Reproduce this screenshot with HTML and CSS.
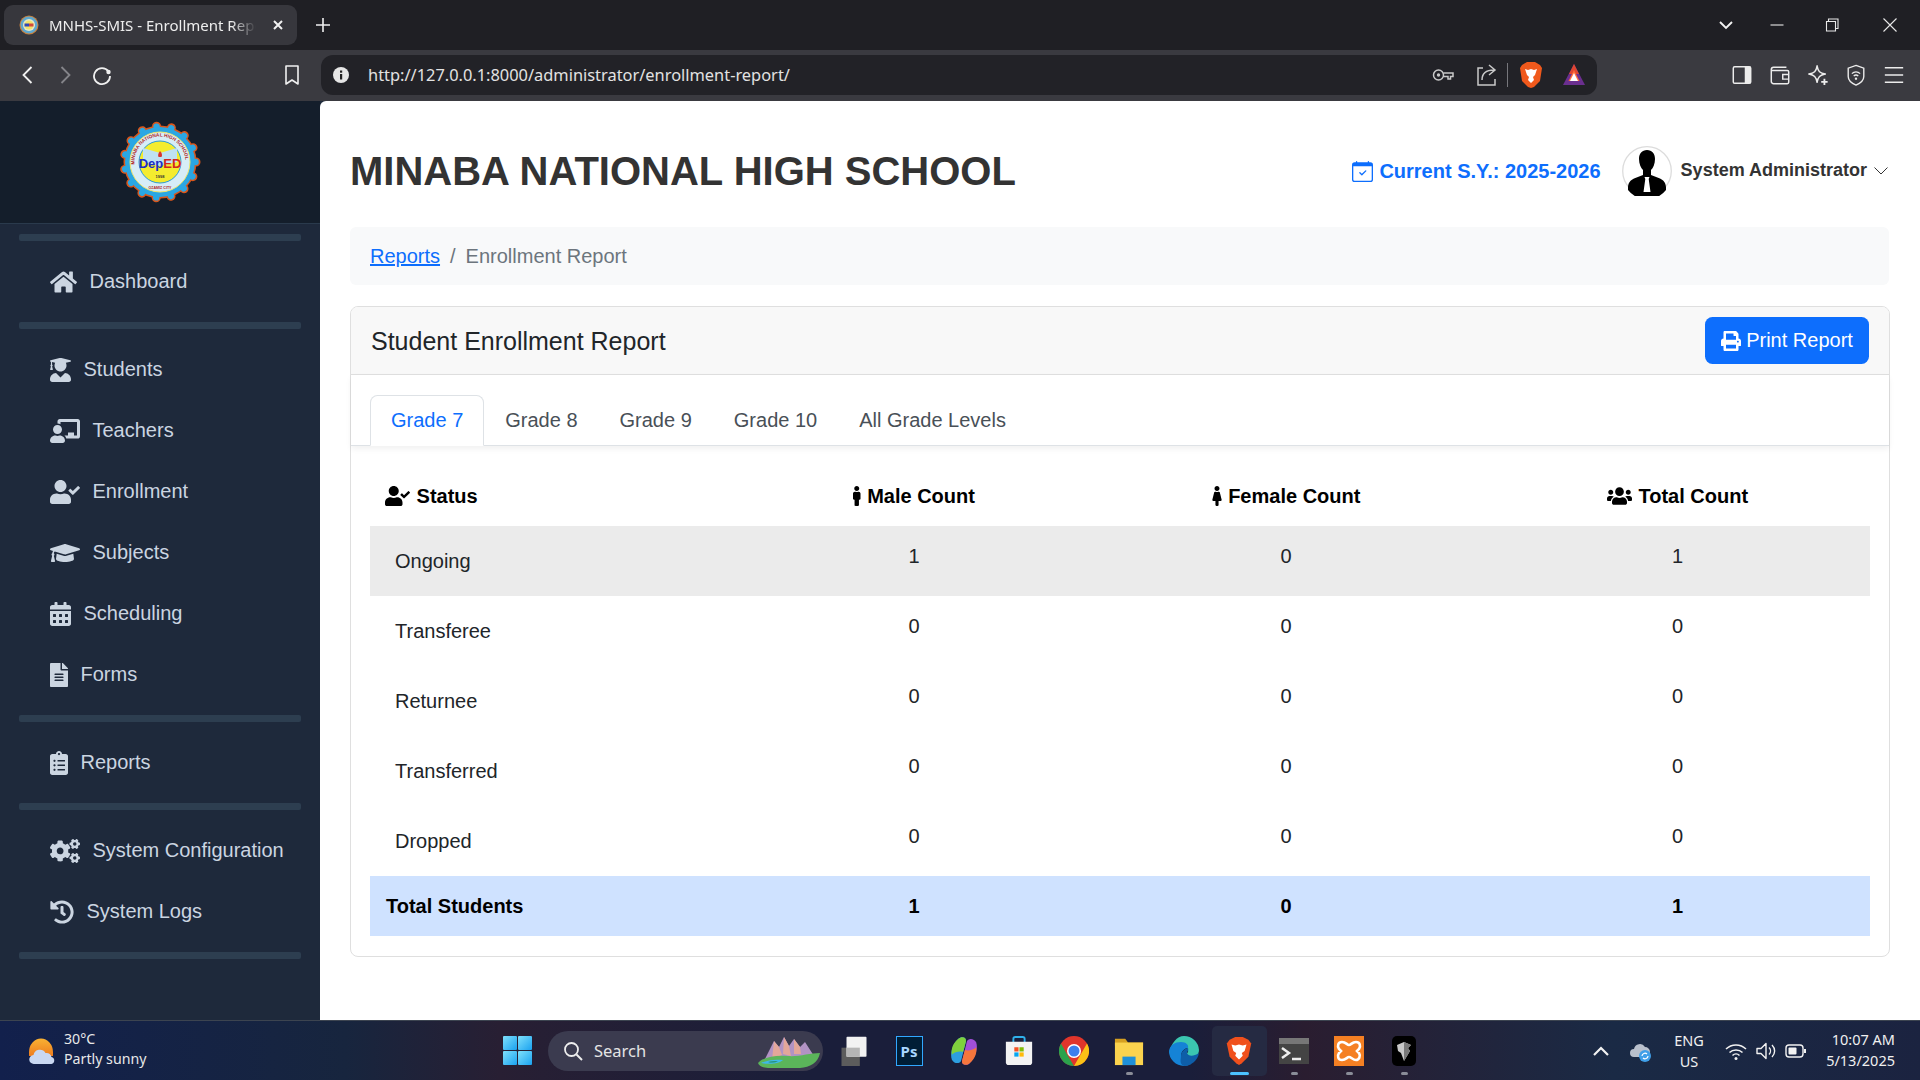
FILE: index.html
```html
<!DOCTYPE html>
<html lang="en">
<head>
<meta charset="utf-8">
<title>MNHS-SMIS - Enrollment Report</title>
<link rel="stylesheet" href="styles.css">
</head>
<body>
<div class="window">

  <div class="tabstrip">
    <div class="tab">
      <svg class="favicon" viewBox="0 0 40 40"><circle cx="20" cy="20" r="19" fill="#c9803c"/><circle cx="20" cy="20" r="17" fill="#5fa8cf"/><circle cx="20" cy="20" r="12" fill="#e9e9c8"/><circle cx="20" cy="20" r="9" fill="#f1e36a"/><rect x="11" y="17" width="9" height="6" fill="#3048b8"/><rect x="20" y="17" width="9" height="6" fill="#d24a3a"/></svg>
      <span class="tab-title">MNHS-SMIS - Enrollment Repo</span>
      <svg class="tab-close" viewBox="0 0 12 12"><path d="M2 2l8 8M10 2l-8 8" stroke="#f2f2f2" stroke-width="2" fill="none"/></svg>
    </div>
    <svg class="tab-new" viewBox="0 0 14 14"><path d="M7 0v14M0 7h14" stroke="#f0f0f0" stroke-width="1.6" fill="none"/></svg>
    <div class="winctl">
      <svg class="wc" viewBox="0 0 14 14"><path d="M1 4l6 6 6-6" stroke="#f2f2f2" stroke-width="1.9" fill="none"/></svg>
      <svg class="wc" viewBox="0 0 14 14"><path d="M0.5 7h13" stroke="#e8e8e8" stroke-width="1.1" fill="none"/></svg>
      <svg class="wc" viewBox="0 0 14 14"><path d="M1.5 3.5h9v9.500h-9zM3.500 3.500v-2.500h9.500v9.500h-2.500" stroke="#e8e8e8" stroke-width="1.1" fill="none"/></svg>
      <svg class="wc" viewBox="0 0 14 14"><path d="M0.500 0.500l13 13M13.500 0.500l-13 13" stroke="#e8e8e8" stroke-width="1.100" fill="none"/></svg>
    </div>
  </div>

  <div class="toolbar">
    <svg class="tb tb-first" viewBox="0 0 22 22"><path d="M14.500 3l-8 8 8 8" stroke="#f0f0f0" stroke-width="1.800" fill="none"/></svg>
    <svg class="tb" viewBox="0 0 22 22"><path d="M7.500 3l8 8-8 8" stroke="#85858a" stroke-width="1.800" fill="none"/></svg>
    <svg class="tb tb-reload" viewBox="0 0 22 22"><path d="M17.500 7.500A8 8 0 1 0 19 12" stroke="#f0f0f0" stroke-width="1.800" fill="none"/><circle cx="17.500" cy="8" r="2.200" fill="#f0f0f0"/></svg>
    <svg class="tb tb-book" viewBox="0 0 22 22"><path d="M5 2h12v18l-6-4-6 4z" stroke="#f0f0f0" stroke-width="1.600" fill="none" stroke-linejoin="round"/></svg>
    <div class="addr">
      <svg class="addr-info" viewBox="0 0 16 16"><circle cx="8" cy="8" r="8" fill="#e6e6e6"/><rect x="7" y="7" width="2.200" height="5.500" fill="#222"/><rect x="7" y="3.500" width="2.200" height="2.200" fill="#222"/></svg>
      <span class="url">http://127.0.0.1:8000/administrator/enrollment-report/</span>
      <svg class="ad ad-key" viewBox="0 0 24 24"><circle cx="7.500" cy="12" r="5" stroke="#c9c9c9" stroke-width="1.500" fill="none"/><circle cx="7.500" cy="12" r="1.700" fill="#c9c9c9"/><path d="M12.500 10h9.500v3.500h-2.500v2.500h-2.500v-2.500h-4.500" stroke="#c9c9c9" stroke-width="1.500" fill="none"/></svg>
      <svg class="ad ad-share" viewBox="0 0 24 24"><path d="M9 5H4v17h17v-6M8 17c0-6 4-10 12-10M15 2l6 5-6 5" stroke="#c9c9c9" stroke-width="1.500" fill="none"/></svg>
      <span class="ad-sep"></span>
      <svg class="ad ad-brave" viewBox="0 0 24 28"><path d="M3 4l5-3h8l5 3 2 3-2 13-6 6-3 1-3-1-6-6L1 7z" fill="#f0591c"/><path d="M6 8l3 1 3-1 3 1 3-1-2 6-2 2 1 3-3 3-3-3 1-3-2-2z" fill="#fff"/></svg>
      <svg class="ad" viewBox="0 0 24 24"><path d="M12 1l11 21H1z" fill="#6b2f8f"/><path d="M12 1L7 11 3 19z" fill="#e0452f"/><path d="M12 1l5 10h-10z" fill="#e0452f"/><path d="M12 7l5.500 11H6.500z" fill="#ff6d3d"/><path d="M12 10l4 8H8z" fill="#fff"/></svg>
    </div>
    <svg class="tb tb-side" viewBox="0 0 24 24"><rect x="2.500" y="3" width="19" height="18" rx="1.500" fill="none" stroke="#ececec" stroke-width="1.600"/><rect x="15" y="3" width="6.500" height="18" fill="#ececec"/></svg>
    <svg class="tb" viewBox="0 0 24 24"><path d="M19 3.500H5A2.500 2.500 0 0 0 2.500 6v13A2.500 2.500 0 0 0 5 21.500h15a1.500 1.500 0 0 0 1.500-1.500V8.500a1.500 1.500 0 0 0-1.500-1.500H3M15 11.500h6.500v5H15z" fill="none" stroke="#ececec" stroke-width="1.600"/></svg>
    <svg class="tb" viewBox="0 0 24 24"><path d="M11 2c1 6 3 8 9 9-6 1-8 3-9 9-1-6-3-8-9-9 6-1 8-3 9-9z" fill="none" stroke="#ececec" stroke-width="1.600" stroke-linejoin="round"/><path d="M19 16v7M15.500 19.500h7" stroke="#ececec" stroke-width="2"/></svg>
    <svg class="tb" viewBox="0 0 24 24"><path d="M12 1.500l8.500 3v9c0 4.500-4 7.500-8.500 9.500-4.500-2-8.500-5-8.500-9.500v-9z" fill="none" stroke="#ececec" stroke-width="1.500"/><path d="M7.500 10.500c2.500-2.500 6.500-2.500 9 0M9.500 13c1.500-1.200 3.500-1.200 5 0" fill="none" stroke="#ececec" stroke-width="1.400"/><circle cx="12" cy="16" r="1.300" fill="#ececec"/></svg>
    <svg class="tb" viewBox="0 0 24 24"><path d="M2 4h20M2 12h20M2 20h20" stroke="#ececec" stroke-width="1.700"/></svg>
  </div>

  <div class="app">
    <aside class="sidebar">
      <div class="brand">
        <svg class="logo" viewBox="0 0 82 82">
          <defs><path id="ring" d="M20.100 55.600A25.500 25.500 0 1 1 61.900 55.600"/></defs>
          <circle cx="41" cy="41" r="36" fill="none" stroke="#d9561b" stroke-width="9" stroke-linecap="round" stroke-dasharray="0.010 15.070"/>
          <circle cx="41" cy="41" r="36.500" fill="#d9561b"/>
          <circle cx="41" cy="41" r="35.500" fill="none" stroke="#2aa7e3" stroke-width="6.500" stroke-linecap="round" stroke-dasharray="0.010 14.860"/>
          <circle cx="41" cy="41" r="35" fill="#2aa7e3"/>
          <circle cx="41" cy="41" r="30" fill="#d7edf7" stroke="#f4e56a" stroke-width="1"/>
          <text class="logo-ring"><textPath href="#ring" startOffset="13">MINABA NATIONAL HIGH SCHOOL</textPath></text>
          <circle cx="41" cy="41" r="21" fill="#f4ec2f" stroke="#2a9bd6" stroke-width="1"/>
          <path d="M24 27l17 5 17-5v14l-17 4-17-4z" fill="#bfe1f3"/>
          <path d="M41 30c2 2 2.500 4 1.500 6h-3c-1-2 0-4 1.500-6z" fill="#d8342a"/>
          <text class="logo-dep" x="41" y="47"><tspan class="dep-b">Dep</tspan><tspan class="dep-r">ED</tspan></text>
          <text class="logo-yr" x="41" y="57">1998</text>
          <text class="logo-city" x="41" y="68">OZAMIZ CITY</text>
        </svg>
      </div>
      <div class="rule"></div>
      <a class="item"><svg class="nav-ic" viewBox="0 0 576 512"><path d="M280.37 148.26L96 300.11V464a16 16 0 0 0 16 16l112.06-.29a16 16 0 0 0 15.92-16V368a16 16 0 0 1 16-16h64a16 16 0 0 1 16 16v95.64a16 16 0 0 0 16 16.05L464 480a16 16 0 0 0 16-16V300L295.67 148.26a12.19 12.19 0 0 0-15.3 0zM571.6 251.47L488 182.56V44.05a12 12 0 0 0-12-12h-56a12 12 0 0 0-12 12v72.61L318.47 43a48 48 0 0 0-61 0L4.34 251.47a12 12 0 0 0-1.6 16.9l25.5 31A12 12 0 0 0 45.15 301l235.22-193.74a12.19 12.19 0 0 1 15.3 0L530.9 301a12 12 0 0 0 16.9-1.6l25.5-31a12 12 0 0 0-1.7-16.93z"/></svg>Dashboard</a>
      <div class="rule"></div>
      <a class="item"><svg class="nav-ic" viewBox="0 0 448 512"><path d="M319.4 320.6L224 416l-95.4-95.4C57.1 323.7 0 382.2 0 454.4v9.6c0 26.5 21.5 48 48 48h352c26.5 0 48-21.5 48-48v-9.6c0-72.2-57.1-130.7-128.6-133.8zM13.6 79.8l6.4 1.5v58.4c-7 4.2-12 11.5-12 20.3 0 8.4 4.6 15.4 11.1 19.7L3.5 242c-1.7 6.9 2.1 14 7.6 14h41.8c5.5 0 9.3-7.1 7.6-14l-15.6-62.3C51.4 175.4 56 168.4 56 160c0-8.8-5-16.1-12-20.3V87.1l66 15.9c-8.6 17.2-14 36.4-14 57 0 70.7 57.3 128 128 128s128-57.3 128-128c0-20.6-5.3-39.8-14-57l96.3-23.2c18.2-4.4 18.2-27.1 0-31.5l-190.4-46c-13-3.1-26.7-3.1-39.7 0L13.6 48.2c-18.1 4.4-18.1 27.2 0 31.6z"/></svg>Students</a>
      <a class="item"><svg class="nav-ic" viewBox="0 0 640 512"><path d="M208 352c-2.39 0-4.78.35-7.06 1.09C187.98 357.3 174.35 360 160 360c-14.35 0-27.98-2.7-40.95-6.91-2.28-.74-4.66-1.09-7.05-1.09C49.94 352-.33 402.48 0 464.62.14 490.88 21.73 512 48 512h224c26.27 0 47.86-21.12 48-47.38.33-62.14-49.94-112.62-112-112.62zm-48-32c53.02 0 96-42.98 96-96s-42.98-96-96-96-96 42.98-96 96 42.98 96 96 96zM592 0H208c-26.47 0-48 22.25-48 49.59V96c23.42 0 45.1 6.78 64 17.8V64h352v288h-64v-64H384v64h-76.24c19.1 16.69 33.12 38.73 39.69 64H592c26.47 0 48-22.25 48-49.59V49.59C640 22.25 618.47 0 592 0z"/></svg>Teachers</a>
      <a class="item"><svg class="nav-ic" viewBox="0 0 640 512"><path d="M224 256c70.7 0 128-57.3 128-128S294.7 0 224 0 96 57.3 96 128s57.3 128 128 128zm89.6 32h-16.7c-22.2 10.2-46.9 16-72.9 16s-50.6-5.8-72.9-16h-16.7C60.2 288 0 348.2 0 422.4V464c0 26.5 21.5 48 48 48h352c26.5 0 48-21.5 48-48v-41.6c0-74.2-60.2-134.4-134.4-134.4zm323-128.4l-27.8-28.1c-4.6-4.7-12.1-4.7-16.8-.1l-104.8 104-45.5-45.8c-4.6-4.7-12.1-4.7-16.8-.1l-28.1 27.9c-4.7 4.6-4.7 12.1-.1 16.8l81.7 82.3c4.6 4.7 12.1 4.7 16.8.1l141.3-140.2c4.6-4.7 4.7-12.2.1-16.8z"/></svg>Enrollment</a>
      <a class="item"><svg class="nav-ic" viewBox="0 0 640 512"><path d="M622.34 153.2L343.4 67.5c-15.2-4.67-31.6-4.67-46.79 0L17.66 153.2c-23.54 7.23-23.54 38.36 0 45.59l48.63 14.94c-10.67 13.19-17.23 29.28-17.88 46.9C38.78 266.15 32 276.11 32 288c0 10.78 5.68 19.85 13.86 25.65L20.33 428.53C18.11 438.52 25.71 448 35.94 448h56.11c10.24 0 17.84-9.48 15.62-19.47L82.14 313.65C90.32 307.85 96 298.78 96 288c0-11.57-6.47-21.25-15.66-26.87.76-15.02 8.44-28.3 20.69-36.72L296.6 284.5c9.06 2.78 26.44 6.25 46.79 0l278.95-85.7c23.55-7.24 23.55-38.36 0-45.6zM352.79 315.09c-28.53 8.76-52.84 3.92-65.59 0l-145.02-44.55L128 384c0 35.35 85.96 64 192 64s192-28.65 192-64l-14.18-113.47-145.03 44.56z"/></svg>Subjects</a>
      <a class="item"><svg class="nav-ic" viewBox="0 0 448 512"><path d="M0 464c0 26.5 21.5 48 48 48h352c26.5 0 48-21.5 48-48V192H0v272zm320-196c0-6.6 5.4-12 12-12h40c6.6 0 12 5.4 12 12v40c0 6.6-5.4 12-12 12h-40c-6.6 0-12-5.4-12-12v-40zm0 128c0-6.6 5.4-12 12-12h40c6.6 0 12 5.4 12 12v40c0 6.6-5.4 12-12 12h-40c-6.6 0-12-5.4-12-12v-40zM192 268c0-6.6 5.4-12 12-12h40c6.6 0 12 5.4 12 12v40c0 6.6-5.4 12-12 12h-40c-6.6 0-12-5.4-12-12v-40zm0 128c0-6.6 5.4-12 12-12h40c6.6 0 12 5.4 12 12v40c0 6.6-5.4 12-12 12h-40c-6.6 0-12-5.4-12-12v-40zM64 268c0-6.6 5.4-12 12-12h40c6.6 0 12 5.4 12 12v40c0 6.6-5.4 12-12 12H76c-6.6 0-12-5.4-12-12v-40zm0 128c0-6.6 5.4-12 12-12h40c6.6 0 12 5.4 12 12v40c0 6.6-5.4 12-12 12H76c-6.6 0-12-5.4-12-12v-40zM400 64h-48V16c0-8.8-7.2-16-16-16h-32c-8.8 0-16 7.2-16 16v48H160V16c0-8.8-7.2-16-16-16h-32c-8.8 0-16 7.2-16 16v48H48C21.500 64 0 85.500 0 112v48h448v-48c0-26.500-21.500-48-48-48z"/></svg>Scheduling</a>
      <a class="item"><svg class="nav-ic" viewBox="0 0 384 512"><path d="M224 136V0H24C10.700 0 0 10.700 0 24v464c0 13.300 10.700 24 24 24h336c13.300 0 24-10.700 24-24V160H248c-13.200 0-24-10.800-24-24zm64 236c0 6.600-5.400 12-12 12H108c-6.600 0-12-5.400-12-12v-8c0-6.600 5.400-12 12-12h168c6.600 0 12 5.400 12 12v8zm0-64c0 6.600-5.400 12-12 12H108c-6.600 0-12-5.400-12-12v-8c0-6.600 5.400-12 12-12h168c6.600 0 12 5.400 12 12v8zm0-72v8c0 6.600-5.400 12-12 12H108c-6.600 0-12-5.400-12-12v-8c0-6.600 5.400-12 12-12h168c6.600 0 12 5.400 12 12zm96-114.100v6.100H256V0h6.100c6.400 0 12.500 2.500 17 7l97.900 98c4.500 4.500 7 10.600 7 16.900z"/></svg>Forms</a>
      <div class="rule"></div>
      <a class="item"><svg class="nav-ic" viewBox="0 0 384 512"><path d="M336 64h-80c0-35.300-28.700-64-64-64s-64 28.700-64 64H48C21.500 64 0 85.500 0 112v352c0 26.500 21.500 48 48 48h288c26.500 0 48-21.500 48-48V112c0-26.500-21.500-48-48-48zM96 424c-13.300 0-24-10.700-24-24s10.700-24 24-24 24 10.700 24 24-10.700 24-24 24zm0-96c-13.300 0-24-10.700-24-24s10.700-24 24-24 24 10.700 24 24-10.700 24-24 24zm0-96c-13.300 0-24-10.700-24-24s10.700-24 24-24 24 10.700 24 24-10.700 24-24 24zm96-192c13.300 0 24 10.700 24 24s-10.700 24-24 24-24-10.700-24-24 10.700-24 24-24zm128 368c0 4.400-3.600 8-8 8H168c-4.400 0-8-3.600-8-8v-16c0-4.400 3.600-8 8-8h144c4.400 0 8 3.600 8 8v16zm0-96c0 4.400-3.600 8-8 8H168c-4.400 0-8-3.600-8-8v-16c0-4.400 3.600-8 8-8h144c4.400 0 8 3.600 8 8v16zm0-96c0 4.400-3.600 8-8 8H168c-4.400 0-8-3.600-8-8v-16c0-4.400 3.600-8 8-8h144c4.400 0 8 3.600 8 8v16z"/></svg>Reports</a>
      <div class="rule"></div>
      <a class="item"><svg class="nav-ic" viewBox="0 0 640 512"><path d="M512.100 191l-8.200 14.300c-3 5.300-9.400 7.500-15.100 5.400-11.800-4.400-22.600-10.700-32.100-18.600-4.600-3.800-5.800-10.500-2.800-15.700l8.200-14.300c-6.900-8-12.300-17.300-15.900-27.400h-16.500c-6 0-11.200-4.300-12.200-10.300-2-12-2.100-24.600 0-37.100 1-6 6.200-10.400 12.200-10.400h16.500c3.600-10.100 9-19.400 15.900-27.400l-8.200-14.300c-3-5.200-1.900-11.900 2.800-15.700 9.500-7.900 20.400-14.200 32.100-18.600 5.700-2.100 12.100.1 15.100 5.400l8.200 14.300c10.500-1.900 21.200-1.900 31.700 0L552 6.300c3-5.300 9.400-7.500 15.100-5.400 11.800 4.400 22.600 10.700 32.100 18.600 4.600 3.800 5.800 10.500 2.800 15.700l-8.200 14.300c6.900 8 12.300 17.300 15.900 27.400h16.500c6 0 11.200 4.300 12.200 10.300 2 12 2.100 24.600 0 37.100-1 6-6.200 10.400-12.200 10.400h-16.500c-3.600 10.100-9 19.400-15.900 27.400l8.200 14.300c3 5.200 1.900 11.900-2.800 15.700-9.500 7.900-20.400 14.200-32.100 18.600-5.700 2.100-12.100-.1-15.100-5.400l-8.200-14.300c-10.400 1.900-21.200 1.900-31.700 0zm-10.500-58.800c38.500 29.600 82.400-14.300 52.800-52.800-38.500-29.700-82.400 14.300-52.800 52.800zM386.300 286.100l33.700 16.800c10.100 5.800 14.500 18.100 10.500 29.100-8.900 24.200-26.400 46.400-42.600 65.800-7.400 8.900-20.200 11.100-30.300 5.300l-29.100-16.800c-16 13.700-34.600 24.600-54.900 31.700v33.600c0 11.600-8.300 21.600-19.700 23.600-24.600 4.200-50.400 4.400-75.900 0-11.500-2-20-11.900-20-23.600V418c-20.300-7.200-38.900-18-54.900-31.700L74 403c-10 5.800-22.900 3.600-30.300-5.300-16.200-19.400-33.300-41.600-42.200-65.700-4-10.900.4-23.200 10.500-29.100l33.300-16.800c-3.900-20.900-3.900-42.400 0-63.400L12 205.800c-10.100-5.800-14.600-18.100-10.500-29 8.900-24.200 26-46.400 42.200-65.800 7.400-8.900 20.200-11.100 30.300-5.300l29.100 16.800c16-13.700 34.600-24.600 54.900-31.700V57.100c0-11.500 8.200-21.500 19.600-23.500 24.600-4.200 50.500-4.400 76-.1 11.500 2 20 11.900 20 23.600v33.600c20.300 7.200 38.900 18 54.900 31.700l29.100-16.800c10-5.800 22.900-3.600 30.300 5.300 16.200 19.400 33.200 41.600 42.100 65.800 4 10.900.1 23.200-10 29.100l-33.700 16.800c3.900 21 3.900 42.500 0 63.500zm-117.600 21.100c59.200-77-28.700-164.900-105.700-105.700-59.200 77 28.700 164.900 105.700 105.700zm243.400 182.700l-8.200 14.300c-3 5.300-9.400 7.500-15.100 5.400-11.800-4.400-22.600-10.700-32.100-18.600-4.600-3.800-5.800-10.500-2.800-15.700l8.200-14.300c-6.900-8-12.300-17.300-15.900-27.400h-16.500c-6 0-11.200-4.300-12.200-10.300-2-12-2.100-24.600 0-37.100 1-6 6.200-10.400 12.200-10.400h16.500c3.600-10.100 9-19.400 15.900-27.400l-8.200-14.300c-3-5.200-1.900-11.900 2.800-15.700 9.500-7.900 20.400-14.200 32.100-18.600 5.700-2.100 12.100.1 15.100 5.400l8.200 14.300c10.500-1.900 21.200-1.900 31.700 0l8.200-14.300c3-5.300 9.400-7.500 15.100-5.400 11.800 4.400 22.600 10.700 32.100 18.600 4.600 3.800 5.800 10.500 2.800 15.700l-8.200 14.300c6.900 8 12.300 17.300 15.900 27.400h16.500c6 0 11.200 4.300 12.200 10.300 2 12 2.100 24.600 0 37.100-1 6-6.200 10.400-12.200 10.400h-16.500c-3.600 10.100-9 19.400-15.900 27.400l8.200 14.300c3 5.200 1.900 11.900-2.800 15.700-9.500 7.900-20.400 14.200-32.100 18.600-5.700 2.100-12.100-.1-15.100-5.400l-8.200-14.300c-10.400 1.900-21.200 1.900-31.700 0zM501.600 431c38.500 29.600 82.400-14.300 52.800-52.800-38.500-29.600-82.400 14.300-52.800 52.800z"/></svg>System Configuration</a>
      <a class="item"><svg class="nav-ic" viewBox="0 0 512 512"><path d="M504 255.531c.253 136.640-111.180 248.372-247.820 248.468-59.015.042-113.223-20.530-155.822-54.911-11.077-8.940-11.905-25.541-1.839-35.607l11.267-11.267c8.609-8.609 22.353-9.551 31.891-1.984C173.062 425.135 212.781 440 256 440c101.705 0 184-82.311 184-184 0-101.705-82.311-184-184-184-48.814 0-93.149 18.969-126.068 49.932l50.754 50.754c10.080 10.080 2.941 27.314-11.313 27.314H24c-8.837 0-16-7.163-16-16V38.627c0-14.254 17.234-21.393 27.314-11.314l49.372 49.372C129.209 34.136 189.552 8 256 8c136.810 0 247.747 110.780 248 247.531zm-180.912 78.784l9.823-12.630c8.138-10.463 6.253-25.542-4.210-33.679L288 256.349V152c0-13.255-10.745-24-24-24h-16c-13.255 0-24 10.745-24 24v135.651l65.409 50.874c10.463 8.137 25.541 6.253 33.679-4.210z"/></svg>System Logs</a>
      <div class="rule"></div>
    </aside>

    <main class="main">
      <header class="top">
        <h1 class="school">MINABA NATIONAL HIGH SCHOOL</h1>
        <div class="top-right">
          <div class="sy">
            <svg class="sy-ic" viewBox="0 0 16 16"><path d="M10.854 7.146a.5.5 0 0 1 0 .708l-3 3a.5.5 0 0 1-.708 0l-1.500-1.500a.5.5 0 1 1 .708-.708L7.500 9.793l2.646-2.647a.5.5 0 0 1 .708 0z"/><path d="M3.500 0a.5.5 0 0 1 .5.5V1h8V.5a.5.5 0 0 1 1 0V1h1a2 2 0 0 1 2 2v11a2 2 0 0 1-2 2H2a2 2 0 0 1-2-2V3a2 2 0 0 1 2-2h1V.5a.5.5 0 0 1 .5-.5zM1 4v10a1 1 0 0 0 1 1h12a1 1 0 0 0 1-1V4H1z"/></svg>
            <span>Current S.Y.: 2025-2026</span>
          </div>
          <svg class="avatar" viewBox="0 0 50 50"><circle cx="25" cy="25" r="24.300" fill="#fff" stroke="#dcdcdc" stroke-width="1.300"/><path d="M25 4c-5 0-8 3.500-8 9 0 5 2 9 4 11v5l-9 3.500c-3.500 1.500-6 4.500-6 9v2.500a24 24 0 0 0 38 0V41.500c0-4.500-2.500-7.500-6-9L29 29v-5c2-2 4-6 4-11 0-5.500-3-9-8-9z" fill="#000"/><path d="M22.500 31h5l-.800 2 1.800 13h-7l1.800-13z" fill="#fff"/></svg>
          <span class="who">System Administrator</span>
          <svg class="who-caret" viewBox="0 0 16 16"><path d="M1.500 4.500L8 11l6.500-6.500" fill="none" stroke="#333" stroke-width="1"/></svg>
        </div>
      </header>

      <nav class="crumbs"><a class="crumb-link">Reports</a><span class="crumb-sep">/</span><span class="crumb-cur">Enrollment Report</span></nav>

      <section class="card">
        <div class="card-head">
          <h5 class="card-title">Student Enrollment Report</h5>
          <button class="print"><svg class="print-ic" viewBox="0 0 512 512"><path d="M448 192V77.250c0-8.490-3.370-16.620-9.370-22.630L393.370 9.370c-6-6-14.140-9.370-22.630-9.370H96C78.330 0 64 14.330 64 32v160c-35.350 0-64 28.650-64 64v112c0 8.840 7.160 16 16 16h48v96c0 17.670 14.330 32 32 32h320c17.670 0 32-14.330 32-32v-96h48c8.840 0 16-7.160 16-16V256c0-35.350-28.650-64-64-64zm-64 256H128v-96h256v96zm0-224H128V64h192v48c0 8.840 7.160 16 16 16h48v96zm48 72c-13.250 0-24-10.750-24-24 0-13.260 10.750-24 24-24s24 10.740 24 24c0 13.250-10.750 24-24 24z"/></svg>Print Report</button>
        </div>
        <ul class="tabs">
          <li class="tab-link active">Grade 7</li>
          <li class="tab-link">Grade 8</li>
          <li class="tab-link">Grade 9</li>
          <li class="tab-link">Grade 10</li>
          <li class="tab-link">All Grade Levels</li>
        </ul>
        <div class="card-body">
          <table class="report">
            <colgroup><col class="c1"><col class="c2"><col class="c3"><col class="c4"></colgroup>
            <thead>
              <tr>
                <th class="th-status"><svg class="th-ic" viewBox="0 0 640 512"><path d="M224 256c70.700 0 128-57.300 128-128S294.700 0 224 0 96 57.300 96 128s57.300 128 128 128zm89.600 32h-16.700c-22.200 10.200-46.900 16-72.900 16s-50.600-5.800-72.900-16h-16.700C60.200 288 0 348.200 0 422.400V464c0 26.500 21.500 48 48 48h352c26.500 0 48-21.500 48-48v-41.600c0-74.200-60.200-134.400-134.400-134.400zm323-128.400l-27.800-28.100c-4.600-4.700-12.100-4.700-16.800-.1l-104.800 104-45.500-45.800c-4.600-4.700-12.100-4.700-16.800-.1l-28.100 27.900c-4.700 4.600-4.700 12.100-.1 16.800l81.700 82.300c4.600 4.700 12.100 4.700 16.800.1l141.300-140.200c4.600-4.700 4.700-12.200.1-16.800z"/></svg> Status</th>
                <th><svg class="th-ic" viewBox="0 0 192 512"><path d="M96 0c35.346 0 64 28.654 64 64s-28.654 64-64 64-64-28.654-64-64S60.654 0 96 0m48 144h-11.360c-22.711 10.443-49.590 10.894-73.280 0H48c-26.510 0-48 21.490-48 48v136c0 13.255 10.745 24 24 24h16v136c0 13.255 10.745 24 24 24h64c13.255 0 24-10.745 24-24V352h16c13.255 0 24-10.745 24-24V192c0-26.510-21.490-48-48-48z"/></svg> Male Count</th>
                <th><svg class="th-ic" viewBox="0 0 256 512"><path d="M128 0c35.346 0 64 28.654 64 64s-28.654 64-64 64c-35.346 0-64-28.654-64-64S92.654 0 128 0m119.283 354.179l-48-192A24 24 0 0 0 176 144h-11.360c-22.711 10.443-49.590 10.894-73.280 0H80a24 24 0 0 0-23.283 18.179l-48 192C4.935 369.305 16.383 384 32 384h56v104c0 13.255 10.745 24 24 24h32c13.255 0 24-10.745 24-24V384h56c15.591 0 27.071-14.671 23.283-29.821z"/></svg> Female Count</th>
                <th><svg class="th-ic" viewBox="0 0 640 512"><path d="M96 224c35.300 0 64-28.700 64-64s-28.700-64-64-64-64 28.700-64 64 28.700 64 64 64zm448 0c35.300 0 64-28.700 64-64s-28.700-64-64-64-64 28.700-64 64 28.700 64 64 64zm32 32h-64c-17.600 0-33.500 7.100-45.100 18.600 40.300 22.100 68.900 62 75.100 109.400h66c17.700 0 32-14.300 32-32v-32c0-35.300-28.700-64-64-64zm-256 0c61.900 0 112-50.100 112-112S381.900 32 320 32 208 82.100 208 144s50.100 112 112 112zm76.800 32h-8.300c-20.800 10-43.900 16-68.500 16s-47.600-6-68.500-16h-8.300C179.600 288 128 339.600 128 403.200V432c0 26.500 21.500 48 48 48h288c26.500 0 48-21.500 48-48v-28.800c0-63.600-51.600-115.200-115.200-115.200zm-223.700-13.400C161.500 263.100 145.600 256 128 256H64c-35.300 0-64 28.700-64 64v32c0 17.700 14.300 32 32 32h65.900c6.300-47.400 34.900-87.300 75.200-109.400z"/></svg> Total Count</th>
              </tr>
            </thead>
            <tbody>
              <tr class="striped"><td class="label">Ongoing</td><td>1</td><td>0</td><td>1</td></tr>
              <tr><td class="label">Transferee</td><td>0</td><td>0</td><td>0</td></tr>
              <tr><td class="label">Returnee</td><td>0</td><td>0</td><td>0</td></tr>
              <tr><td class="label">Transferred</td><td>0</td><td>0</td><td>0</td></tr>
              <tr><td class="label">Dropped</td><td>0</td><td>0</td><td>0</td></tr>
            </tbody>
            <tfoot>
              <tr><td class="foot-label">Total Students</td><td>1</td><td>0</td><td>1</td></tr>
            </tfoot>
          </table>
        </div>
      </section>
    </main>
  </div>

  <footer class="taskbar">
    <div class="weather">
      <svg class="weather-ic" viewBox="0 0 28 28"><defs><linearGradient id="sun" x1="0" y1="0" x2="0" y2="1"><stop offset="0" stop-color="#f9b233"/><stop offset="1" stop-color="#ee7d1f"/></linearGradient></defs><path d="M1 15a11.500 13 0 0 1 24 0v4H1z" fill="url(#sun)"/><path d="M6 27a4.500 4.500 0 0 1-.5-9 6.500 6.500 0 0 1 12-2 5.500 5.500 0 0 1 6 4 3.600 3.600 0 0 1 0 7z" fill="#c9d8f2"/></svg>
      <div class="weather-text"><span class="w-temp">30°C</span><span class="w-desc">Partly sunny</span></div>
    </div>
    <svg class="win" viewBox="0 0 29 29"><defs><linearGradient id="w" x1="0" y1="0" x2="1" y2="1"><stop offset="0" stop-color="#7fe0fb"/><stop offset="1" stop-color="#1aa2f0"/></linearGradient></defs><rect width="14" height="14" rx="1" fill="url(#w)"/><rect x="15" width="14" height="14" rx="1" fill="url(#w)"/><rect y="15" width="14" height="14" rx="1" fill="url(#w)"/><rect x="15" y="15" width="14" height="14" rx="1" fill="url(#w)"/></svg>
    <div class="search">
      <svg class="search-ic" viewBox="0 0 20 20"><circle cx="8.500" cy="8.500" r="6.500" fill="none" stroke="#eee" stroke-width="1.800"/><path d="M13.500 13.500l5.500 5.500" stroke="#eee" stroke-width="2"/></svg>
      <span class="search-text">Search</span>
      <svg class="search-art" viewBox="0 0 62 36"><path d="M6 28L16 8l5 6 5-10 5 9 5-7 6 8 5-5 9 14z" fill="#b293c4"/><path d="M16 8l5 6 3 8-10 5zM26 4l5 9 2 10-8-2zM36 6l6 8 1 7-7 0z" fill="#e3a79a"/><path d="M0 30c6-7 20-8 30-7s22-3 32-3c-2 10-10 14-20 15H10C5 35 1 33 0 30z" fill="#5bb55a"/><path d="M3 30c6-3 14-4 22-3-3 3-12 5-22 3z" fill="#3fb8e8"/><path d="M10 29c3-1 7-1 10-.5-3 1.200-7 1.500-10 .5z" fill="#1f8a5d"/></svg>
    </div>
    <div class="apps">
      <div class="app-cell"><svg class="app-ic" viewBox="0 0 32 36"><rect x="1" y="14" width="22" height="22" fill="#5c5c5c"/><rect x="7" y="1" width="24" height="24" rx="1" fill="#f2f2f2"/><rect x="7" y="14" width="16" height="11" fill="#b5b5b5"/></svg></div>
      <div class="app-cell"><div class="ps">Ps</div></div>
      <div class="app-cell"><svg class="app-ic" viewBox="0 0 30 32"><path d="M9 3c3-3 9-2 8 3L12 26c-1 4-8 4-10-1S2 10 9 3z" fill="#2d9fe0"/><path d="M9 3c3-3 9-2 8 3l-3 11c-4-1-9 0-12 3C1 14 3 8 9 3z" fill="#7fd03d"/><path d="M21 29c-3 3-9 2-8-3l5-20c1-4 8-4 10 1s0 15-7 22z" fill="#a24fd8"/><path d="M21 29c-3 3-9 2-8-3l3-11c4 1 9 0 12-3 1 6-1 12-7 17z" fill="#f5763c"/></svg></div>
      <div class="app-cell"><svg class="app-ic" viewBox="0 0 30 32"><path d="M9 7V3a2 2 0 0 1 2-2h8a2 2 0 0 1 2 2v4" fill="none" stroke="#2fb0ea" stroke-width="2"/><path d="M1 6h28v22a3 3 0 0 1-3 3H4a3 3 0 0 1-3-3z" fill="#f3f3f3"/><rect x="10" y="12" width="4.500" height="4.500" fill="#f35325"/><rect x="15.500" y="12" width="4.500" height="4.500" fill="#81bc06"/><rect x="10" y="17.500" width="4.500" height="4.500" fill="#05a6f0"/><rect x="15.500" y="17.500" width="4.500" height="4.500" fill="#ffba08"/></svg></div>
      <div class="app-cell"><svg class="app-ic" viewBox="0 0 30 30"><circle cx="15" cy="15" r="15" fill="#e0352b"/><path d="M15 30A15 15 0 0 1 2 7.500L9 20z" fill="#2ba24c"/><path d="M15 30l6.500-11.200L28 7.500A15 15 0 0 1 15 30z" fill="#fbc116"/><circle cx="15" cy="15" r="7" fill="#fff"/><circle cx="15" cy="15" r="5.500" fill="#3c7fec"/></svg></div>
      <div class="app-cell"><svg class="app-ic" viewBox="0 0 32 32"><path d="M1 3h11l3 4h16v3H1z" fill="#d6a021"/><rect x="1" y="7" width="30" height="24" fill="#fbd34e"/><rect x="9" y="22" width="14" height="9" fill="#1f90d8"/></svg><span class="dot"></span></div>
      <div class="app-cell"><svg class="app-ic" viewBox="0 0 30 30"><path d="M15 0a15 15 0 0 1 15 14c0 6-6 8-10 7-3-1-3-3-1-5 1-4-3-6-7-6-6 0-10 4-12 8C2 7 8 0 15 0z" fill="#3bc6b0"/><path d="M0 15C1 9 6 6 12 6c5 0 8 3 7 6-3 0-7 3-7 8 0 5 5 9 10 8-2 1-5 2-7 2A15 15 0 0 1 0 15z" fill="#1583d6"/><path d="M12 20c0-4 3-7 7-8 1 2-1 4-1 5 1 3 6 4 12 0-1 7-8 13-15 13-5-2-3-7-3-10z" fill="#0e5ea8"/></svg></div>
      <div class="app-cell app-on"><svg class="app-ic" viewBox="0 0 28 32"><path d="M4 4l6-3h8l6 3 3 4-3 14-7 7-3 2-3-2-7-7L1 8z" fill="#f0501c"/><path d="M6 9l4 1 4-1 4 1 4-1-2 7-3 2 1 3-4 4-4-4 1-3-3-2z" fill="#fff"/></svg><span class="bar"></span></div>
      <div class="app-cell"><svg class="app-ic" viewBox="0 0 30 30"><rect y="2" width="30" height="26" fill="#444"/><rect y="2" width="30" height="6" fill="#777"/><path d="M3 12l7 5-7 5" fill="none" stroke="#eee" stroke-width="2.500"/><path d="M13 23h9" stroke="#eee" stroke-width="2.500"/></svg><span class="dot"></span></div>
      <div class="app-cell"><svg class="app-ic" viewBox="0 0 30 30"><rect width="30" height="30" fill="#f58023"/><path d="M8 6c4 0 5 3 7 3s3-3 7-3 5 4 3 7l-2 2 2 2c2 3 0 7-3 7s-5-3-7-3-3 3-7 3-5-4-3-7l2-2-2-2C3 10 4 6 8 6z" fill="none" stroke="#fff" stroke-width="2.600"/></svg><span class="dot"></span></div>
      <div class="app-cell"><svg class="app-ic" viewBox="0 0 24 30"><rect width="24" height="30" rx="5" fill="#000"/><path d="M5 9l7-3 7 3-3 3 2 3-6 10-3-8-3-2z" fill="#c9c9c9"/><path d="M12 6l7 3-3 3 2 3-6 10z" fill="#7a7a7a"/></svg><span class="dot"></span></div>
    </div>
    <div class="tray">
      <svg class="tray-caret" viewBox="0 0 24 24"><path d="M5 16l7-7 7 7" fill="none" stroke="#f2f2f2" stroke-width="2.200"/></svg>
      <div class="tray-cloud"><svg class="t-ic" viewBox="0 0 24 24"><path d="M5 18a4 4 0 0 1 0-8 6 6 0 0 1 11-2 5 5 0 0 1 5 5v5z" fill="#b9c0cc"/><circle cx="16" cy="17" r="6" fill="#3f9fe8"/><path d="M13 17a3 3 0 0 1 5-2M19 17a3 3 0 0 1-5 2" stroke="#fff" stroke-width="1.200" fill="none"/></svg></div>
      <div class="lang"><span>ENG</span><span>US</span></div>
      <svg class="t-ic t-wifi" viewBox="0 0 24 24"><path d="M2 10c5.500-5.500 14.500-5.500 20 0M5.500 13.500c3.500-3.500 9.500-3.500 13 0M8.500 16.500c2-2 5-2 7 0" fill="none" stroke="#f2f2f2" stroke-width="1.500"/><circle cx="12" cy="19.500" r="1.500" fill="#f2f2f2"/></svg>
      <svg class="t-ic t-gap" viewBox="0 0 24 24"><path d="M3 9.500h4l5-5v15l-5-5H3z" fill="none" stroke="#f2f2f2" stroke-width="1.400" stroke-linejoin="round"/><path d="M15 8.500c2 2 2 5 0 7M18 6c3.500 3.500 3.500 8.500 0 12" fill="none" stroke="#f2f2f2" stroke-width="1.400"/></svg>
      <svg class="t-ic t-gap" viewBox="0 0 24 24"><rect x="2" y="6" width="17" height="12" rx="3" fill="none" stroke="#f2f2f2" stroke-width="1.400"/><rect x="4.500" y="8.500" width="8" height="7" rx="1" fill="#f2f2f2"/><rect x="20" y="10" width="2" height="4" fill="#f2f2f2"/></svg>
      <div class="clock"><span>10:07 AM</span><span>5/13/2025</span></div>
    </div>
  </footer>
</div>
</body>
</html>
```
FILE: styles.css
```css
* { box-sizing: border-box; }
html, body { margin: 0; padding: 0; }
body { width: 1920px; height: 1080px; overflow: hidden; font-family: "Liberation Sans", Arial, sans-serif; }
.window { width: 1920px; height: 1080px; display: flex; flex-direction: column; background: #1e293b; }

/* browser tab strip */
.tabstrip { height: 50px; background: #1f1f24; display: flex; align-items: flex-start; padding-left: 4px; flex: none; }
.tab { width: 293px; height: 40px; margin-top: 5px; background: #37373d; border-radius: 9px; display: flex; align-items: center; padding-left: 15px; }
.favicon { width: 20px; height: 20px; flex: none; }
.tab-title { width: 207px; margin-left: 10px; white-space: nowrap; overflow: hidden; font: 15px "Noto Sans", sans-serif; color: #eeeeee; -webkit-mask-image: linear-gradient(90deg, #000 88%, transparent 100%); mask-image: linear-gradient(90deg, #000 88%, transparent 100%); }
.tab-close { width: 12px; height: 12px; margin-left: 16px; flex: none; }
.tab-new { width: 14px; height: 14px; margin-left: 19px; margin-top: 18px; flex: none; }
.winctl { margin-left: auto; display: grid; grid-template-columns: 50px 52px 58px 58px; justify-items: center; align-items: center; height: 50px; padding-right: 1px; }
.wc { width: 14px; height: 14px; }

/* browser toolbar */
.toolbar { height: 51px; background: #3a3a40; display: flex; align-items: center; flex: none; padding-left: 8px; padding-bottom: 1px; }
.tb { width: 22px; height: 22px; margin: 0 8px; flex: none; }
.tb-first { margin-left: 9px; margin-right: 7px; }
.tb-reload { margin-left: 7px; margin-right: 9px; }
.tb-book { margin-left: 159px; margin-right: 18px; }
.tb-side { margin-left: 134px; }
.addr { width: 1276px; height: 40px; background: #222227; border-radius: 12px; display: flex; align-items: center; padding: 0 11px 0 12px; flex: none; }
.addr-info { width: 16px; height: 16px; flex: none; }
.url { flex: 1; margin: 0 0 2px 19px; font: 16.400px "Noto Sans", sans-serif; color: #e2e2e2; }
.ad { width: 24px; height: 24px; flex: none; }
.ad-key { margin-right: 19px; }
.ad-share { margin-right: 9px; }
.ad-sep { width: 1px; height: 24px; background: #77777c; margin-right: 11px; }
.ad-brave { margin-right: 19px; height: 28px; }

/* app shell */
.app { height: 919px; display: flex; flex: none; }
.sidebar { width: 320px; flex: none; background: #1e293b; display: flex; flex-direction: column; }
.brand { height: 123px; background: #141e2b; border-bottom: 1px solid #2a3a4c; display: flex; justify-content: center; align-items: center; flex: none; margin-bottom: 10px; }
.logo { width: 82px; height: 82px; overflow: visible; }
.logo-ring { font: bold 4.800px "Liberation Sans", sans-serif; fill: #b3261e; }
.logo-dep { font: bold 13px "Liberation Sans", sans-serif; text-anchor: middle; }
.dep-b { fill: #1c2ec4; }
.dep-r { fill: #d3261e; }
.logo-yr { font: bold 4px "Liberation Sans", sans-serif; text-anchor: middle; fill: #333; }
.logo-city { font: bold 3.600px "Liberation Sans", sans-serif; text-anchor: middle; fill: #b3261e; }
.rule { height: 7px; margin: 0 19px 10px; background: #2d3e50; border-radius: 2px; flex: none; }
.item { height: 61px; padding-left: 50px; display: flex; align-items: center; font-size: 20px; color: #cbd5e1; flex: none; }
.item + .rule { margin-top: 10px; }
.nav-ic { height: 24px; width: auto; fill: #cbd5e1; margin-right: 12.500px; flex: none; }

/* main panel */
.main { flex: 1; background: #fff; border-top-left-radius: 6px; padding: 40px 31px 0 30px; display: flex; flex-direction: column; min-width: 0; }
.top { height: 60px; display: flex; align-items: center; justify-content: space-between; margin-bottom: 26px; flex: none; }
.school { margin: 0; font-size: 40px; font-weight: 700; color: #333; line-height: 60px; }
.top-right { display: flex; align-items: center; }
.sy { display: flex; align-items: center; font-size: 20px; font-weight: 700; color: #0d6efd; }
.sy-ic { width: 21px; height: 21px; fill: #0d6efd; margin-right: 6px; }
.avatar { width: 50px; height: 50px; margin-left: 21px; flex: none; }
.who { margin: 0 0 2px 9px; font-size: 18px; font-weight: 700; color: #333; }
.who-caret { width: 16px; height: 16px; margin-left: 6px; }
.crumbs { height: 58px; background: #f8f9fa; border-radius: 6px; padding: 0 20px; display: flex; align-items: center; font-size: 20px; flex: none; margin-bottom: 21px; }
.crumb-link { color: #0d6efd; text-decoration: underline; }
.crumb-sep { color: #6c757d; margin: 0 10px; }
.crumb-cur { color: #6c757d; }

/* card */
.card { height: 651px; width: 1540px; border: 1px solid #dfdfdf; border-radius: 8px; display: flex; flex-direction: column; flex: none; }
.card-head { height: 68px; background: #f8f8f8; border-bottom: 1px solid #dfdfdf; border-radius: 7px 7px 0 0; padding: 0 20px; display: flex; align-items: center; justify-content: space-between; flex: none; }
.card-title { margin: 2px 0 0; font-size: 25px; font-weight: 400; color: #212529; }
.print { height: 47px; width: 164px; border: 0; border-radius: 7.500px; background: #0d6efd; color: #fff; font: 20px "Liberation Sans", sans-serif; display: flex; align-items: center; justify-content: center; padding: 0; }
.print-ic { width: 20px; height: 20px; fill: #fff; margin-right: 5px; }
.tabs { list-style: none; margin: 0; padding: 20px 0 0 19px; height: 71px; display: flex; border-bottom: 1px solid #dee2e6; box-shadow: 0 3px 6px rgba(0,0,0,.06); flex: none; }
.tab-link { height: 51px; padding: 10px 21px; font-size: 20px; line-height: 30px; color: #495057; white-space: nowrap; }
.tab-link.active { color: #0d6efd; background: #fff; border: 1px solid #dee2e6; border-bottom-color: #fff; border-radius: 7.500px 7.500px 0 0; padding: 9px 20px 10px; }
.card-body { padding: 19px 19px 0; }

/* table */
.report { width: 1500px; table-layout: fixed; border-collapse: collapse; font-size: 20px; line-height: 30px; }
.c1 { width: 371px; }
.c2 { width: 346px; }
.c3 { width: 398px; }
.c4 { width: 385px; }
.report th { height: 61px; padding: 0 15px; text-align: center; font-weight: 700; color: #000; vertical-align: middle; }
.report th.th-status { text-align: left; }
.th-ic { height: 20px; width: auto; vertical-align: -3px; fill: #000; margin-right: 1px; }
.report td { padding: 15px; height: 70px; text-align: center; vertical-align: top; color: #212529; }
.report td.label { padding: 20px 25px; text-align: left; }
.striped { background: #ebebeb; }
.report tfoot td { height: 60px; background: #cfe2ff; color: #000; font-weight: 700; }
.report tfoot td.foot-label { text-align: left; padding-left: 16px; }

/* taskbar */
.taskbar { height: 60px; flex: none; display: flex; align-items: center; border-top: 1px solid #3c4450; background: linear-gradient(90deg, #12204c 0, #17253e 18%, #281f33 26%, #1a1e3a 42%, #1a1e3a 62%, #2a1d30 68%, #1a2a45 84%, #1b2340 100%); }
.weather { width: 503px; padding-left: 28px; display: flex; align-items: center; flex: none; }
.weather-ic { width: 28px; height: 28px; flex: none; }
.weather-text { margin: 0 0 4px 8px; display: flex; flex-direction: column; font: 14.200px/20px "Noto Sans", sans-serif; color: #e8e8e8; }
.win { width: 29px; height: 29px; flex: none; }
.search { width: 275px; height: 40px; margin-left: 16px; background: #3b3b4f; border-radius: 20px; display: flex; align-items: center; padding-left: 15px; flex: none; }
.search-ic { width: 20px; height: 20px; flex: none; }
.search-text { margin-left: 11px; font: 16.500px "Noto Sans", sans-serif; color: #e4e4e4; }
.search-art { width: 62px; height: 36px; margin-left: auto; margin-right: 3px; flex: none; }
.apps { display: flex; margin-left: 3.500px; flex: none; }
.app-cell { width: 55px; height: 50px; position: relative; display: flex; align-items: center; justify-content: center; border-radius: 5px; }
.app-ic { height: 30px; width: 30px; }
.app-on { background: #252a42; }
.ps { width: 27px; height: 30px; background: #001e36; border: 1px solid #31a8ff; color: #a8d8ff; font: bold 15px/28px "Noto Sans", sans-serif; text-align: center; }
.dot { position: absolute; left: 24px; bottom: 1px; width: 7px; height: 3px; border-radius: 2px; background: #8a8d98; }
.bar { position: absolute; left: 18px; bottom: 1px; width: 19px; height: 3px; border-radius: 2px; background: #4cc2ff; }
.tray { margin-left: auto; padding-right: 25px; display: flex; align-items: center; color: #f0f0f0; font: 14.500px/21px "Noto Sans", sans-serif; flex: none; }
.tray-caret { width: 24px; height: 24px; flex: none; }
.tray-cloud { width: 56px; display: flex; justify-content: center; }
.t-ic { width: 24px; height: 24px; flex: none; }
.lang { width: 40px; display: flex; flex-direction: column; align-items: center; }
.t-wifi { margin-left: 15px; }
.t-gap { margin-left: 6px; }
.clock { width: 87px; margin-bottom: 2px; display: flex; flex-direction: column; align-items: flex-end; }
```
